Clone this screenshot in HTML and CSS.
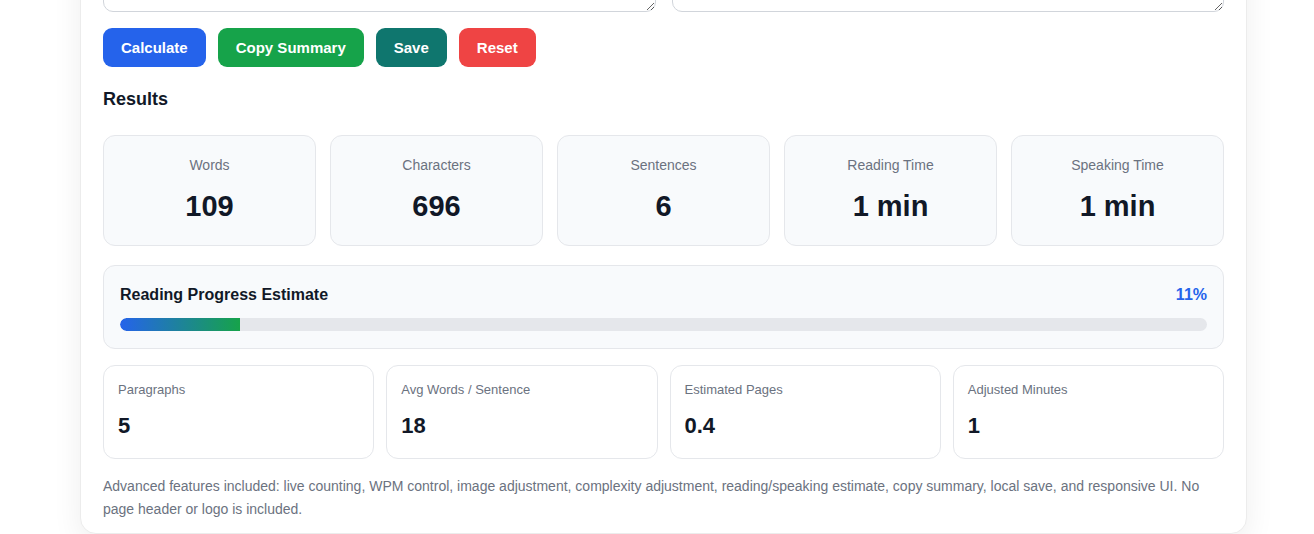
FILE: index.html
```html
<!DOCTYPE html>
<html lang="en">
<head>
<meta charset="utf-8">
<title>Word Counter &amp; Reading Time</title>
<link rel="stylesheet" href="styles.css">
</head>
<body>
<main class="panel">
  <div class="inputs">
    <textarea class="text-in scrolling" aria-label="Text"></textarea>
    <textarea class="text-in" aria-label="Notes"></textarea>
  </div>

  <div class="actions">
    <button class="btn btn-blue">Calculate</button>
    <button class="btn btn-green">Copy Summary</button>
    <button class="btn btn-teal">Save</button>
    <button class="btn btn-red">Reset</button>
  </div>

  <h2 class="section-title">Results</h2>

  <div class="stats">
    <div class="stat"><div class="stat-label">Words</div><div class="stat-value">109</div></div>
    <div class="stat"><div class="stat-label">Characters</div><div class="stat-value">696</div></div>
    <div class="stat"><div class="stat-label">Sentences</div><div class="stat-value">6</div></div>
    <div class="stat"><div class="stat-label">Reading Time</div><div class="stat-value">1 min</div></div>
    <div class="stat"><div class="stat-label">Speaking Time</div><div class="stat-value">1 min</div></div>
  </div>

  <section class="progress">
    <div class="progress-head">
      <span class="progress-title">Reading Progress Estimate</span>
      <span class="progress-pct">11%</span>
    </div>
    <div class="track"><div class="fill" style="width: 11%"></div></div>
  </section>

  <div class="minis">
    <div class="mini"><div class="mini-label">Paragraphs</div><div class="mini-value">5</div></div>
    <div class="mini"><div class="mini-label">Avg Words / Sentence</div><div class="mini-value">18</div></div>
    <div class="mini"><div class="mini-label">Estimated Pages</div><div class="mini-value">0.4</div></div>
    <div class="mini"><div class="mini-label">Adjusted Minutes</div><div class="mini-value">1</div></div>
  </div>

  <p class="note">Advanced features included: live counting, WPM control, image adjustment, complexity adjustment, reading/speaking estimate, copy summary, local save, and responsive UI. No page header or logo is included.</p>
</main>
</body>
</html>
```

FILE: styles.css
```css
* {
  box-sizing: border-box;
}

html, body {
  margin: 0;
  background: #ffffff;
  font-family: "Liberation Sans", Arial, sans-serif;
  color: #111827;
  overflow: hidden;
}

.panel {
  width: 1167px;
  margin: -59px 0 0 80px;
  padding: 22px 22px 12px;
  background: #ffffff;
  border: 1px solid #ececec;
  border-radius: 16px;
  box-shadow: 0 10px 30px rgba(0, 0, 0, 0.07);
}

.inputs {
  display: grid;
  grid-template-columns: 1fr 1fr;
  gap: 16px;
}

.text-in {
  display: block;
  width: 100%;
  height: 48px;
  border: 1px solid #d1d5db;
  border-radius: 10px;
  resize: vertical;
  font: 14px "Liberation Sans", Arial, sans-serif;
}

.text-in.scrolling {
  overflow-y: scroll;
}

.actions {
  display: flex;
  gap: 12px;
  margin-top: 16px;
}

.btn {
  height: 39px;
  padding: 0 18px;
  border: none;
  border-radius: 9px;
  color: #ffffff;
  font: bold 15px "Liberation Sans", Arial, sans-serif;
}

.btn-blue { background: #2563eb; }
.btn-green { background: #16a34a; }
.btn-teal { background: #0f766e; }
.btn-red { background: #ef4444; }

.section-title {
  margin: 20px 0 24px;
  font-size: 18px;
  line-height: 24px;
  font-weight: bold;
  color: #111827;
}

.stats {
  display: grid;
  grid-template-columns: repeat(5, 1fr);
  gap: 14px;
}

.stat {
  background: #f8fafc;
  border: 1px solid #e5e7eb;
  border-radius: 12px;
  padding: 19px 12px 22px;
  text-align: center;
}

.stat-label {
  font-size: 14px;
  line-height: 20px;
  color: #6b7280;
}

.stat-value {
  margin-top: 14px;
  font-size: 29px;
  line-height: 34px;
  font-weight: bold;
  color: #111827;
}

.progress {
  margin-top: 19px;
  background: #f8fafc;
  border: 1px solid #e5e7eb;
  border-radius: 12px;
  padding: 17px 16px 17px;
}

.progress-head {
  display: flex;
  justify-content: space-between;
  align-items: center;
  line-height: 24px;
}

.progress-title {
  font-size: 16px;
  font-weight: bold;
  color: #111827;
}

.progress-pct {
  font-size: 16px;
  font-weight: bold;
  color: #2563eb;
}

.track {
  margin-top: 11px;
  height: 13px;
  border-radius: 7px;
  background: #e5e7eb;
  overflow: hidden;
}

.fill {
  height: 100%;
  border-radius: 7px 0 0 7px;
  background: linear-gradient(90deg, #2563eb, #16a34a);
}

.minis {
  display: grid;
  grid-template-columns: repeat(4, 1fr);
  gap: 12px;
  margin-top: 16px;
}

.mini {
  background: #ffffff;
  border: 1px solid #e5e7eb;
  border-radius: 12px;
  padding: 15px 14px 18px;
}

.mini-label {
  font-size: 13px;
  line-height: 18px;
  color: #6b7280;
}

.mini-value {
  margin-top: 13px;
  font-size: 22px;
  line-height: 28px;
  font-weight: bold;
  color: #111827;
}

.note {
  margin: 16px 0 0;
  font-size: 14px;
  line-height: 23px;
  color: #6b7280;
}
```
